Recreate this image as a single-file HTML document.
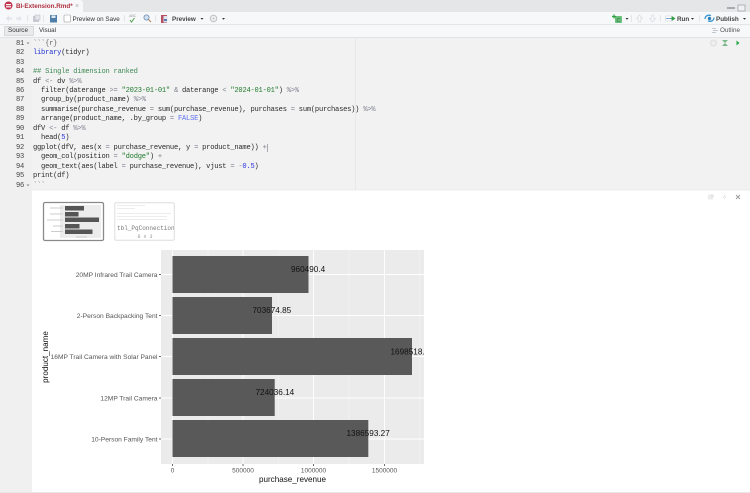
<!DOCTYPE html>
<html><head><meta charset="utf-8"><style>
html,body{margin:0;padding:0;width:750px;height:493px;overflow:hidden;background:#f2f2f2;font-family:"Liberation Sans",sans-serif}
#w{left:0;top:0;width:750px;height:493px;filter:blur(.3px)}
div{position:absolute;box-sizing:border-box}
.l{left:33px;height:10px;font:7.1px/10px "Liberation Mono",monospace;letter-spacing:-.23px;color:#2a2a2a;white-space:pre;margin-top:.7px}
.n{left:0;width:24px;text-align:right;font:7.1px/10px "Liberation Mono",monospace;letter-spacing:-.23px;color:#444;margin-top:.7px}
.k{color:#2233d0}.c{color:#3f8a55}.s{color:#1f7a2c}.o{color:#7f8190}.d{color:#2a30e0}.f{color:#5f72f0}
.t{font-size:6.3px;color:#333;white-space:pre}
</style></head><body><div id="w">
<div style="left:0;top:0;width:750px;height:12px;background:#e5e6e8"></div>
<div style="left:0;top:0;width:83px;height:13px;background:#f7f8f9;border-radius:0 3px 0 0"></div>
<div style="left:0;top:12px;width:750px;height:13px;background:#f7f8f9;border-bottom:1px solid #e4e5e7"></div>
<div style="left:0;top:25px;width:750px;height:13px;background:#f7f8f9;border-bottom:1px solid #e2e3e5"></div>
<div style="left:16px;top:2px;color:#b03040;font-size:6.3px;line-height:9px;font-weight:bold;white-space:pre">BI-Extension.Rmd*</div>
<div style="left:75px;top:2px;color:#aaa;font-size:7px;line-height:9px">×</div>
<svg style="position:absolute;left:0;top:0" width="750" height="38" viewBox="0 0 750 38">
<circle cx="8.5" cy="5.5" r="4" fill="#c0304a"/><rect x="6" y="4" width="5" height="1.2" fill="#fff"/><rect x="6" y="6.2" width="5" height="1.2" fill="#fff"/>
<path d="M6 18.5l3-3v2h3v2H9v2z" fill="#dfe4ea"/><path d="M22 18.5l-3-3v2h-3v2h3v2z" fill="#e3e7ec"/>
<rect x="33" y="16" width="6" height="6" fill="#c8ccd2"/><rect x="35" y="15" width="5" height="5" fill="#e2e5e9" stroke="#aab" stroke-width=".4"/>
<rect x="50" y="15" width="7" height="7.5" fill="#4f7ea8" rx=".5"/><rect x="51.5" y="15.5" width="4" height="2.5" fill="#dfe9f2"/>
<rect x="64" y="15" width="6.5" height="7" rx="1" fill="#fff" stroke="#9a9a9a" stroke-width=".6"/>
<path d="M130 20l1.5 2 3-4" fill="none" stroke="#50a050" stroke-width="1"/>
<text x="129" y="17" font-size="3.5" fill="#999" font-family="Liberation Sans">ABC</text>
<circle cx="146.500" cy="17.500" r="2.600" fill="#cfe0ee" stroke="#6d8fb0" stroke-width=".8"/><path d="M148.500 19.500l2.500 2.500" stroke="#b08050" stroke-width="1.100"/>
<rect x="161" y="15" width="6" height="8" fill="#b55060"/><rect x="163.500" y="16" width="4" height="6.500" fill="#dfe6f2"/><rect x="164" y="19" width="3" height="2" fill="#5a7cb0"/>
<path d="M200.500 18h3l-1.500 1.700z" fill="#333"/>
<circle cx="213.500" cy="18.500" r="3.300" fill="#eee" stroke="#c0c0c0"/><circle cx="213.500" cy="18.500" r="1" fill="#c8c8c8"/>
<path d="M222 18h3l-1.500 1.700z" fill="#333"/>
<g stroke="#dcdde0" stroke-width=".7"><path d="M27.500 15v7M43.500 15v7M124.500 15v7M155.500 15v7M631.500 15v7M660.500 15v7M699.500 15v7"/></g>
<rect x="615" y="16" width="7" height="7" rx="1" fill="#6abf7a"/><path d="M612 16.500h4M614 14.500v4" stroke="#2f9e44" stroke-width="1.200"/><text x="616.500" y="22" font-size="5.500" fill="#2c6e3c" font-family="Liberation Sans">C</text>
<path d="M625.500 18h3l-1.500 1.700z" fill="#333"/>
<path d="M639.500 15l-3 3.500h1.700v3.500h2.600v-3.500h1.700z" fill="#f6f7f8" stroke="#d6d8db" stroke-width=".6"/>
<path d="M652.500 22l-3-3.500h1.700V15h2.600v3.500h1.700z" fill="#f6f7f8" stroke="#d6d8db" stroke-width=".6"/>
<rect x="665.500" y="16" width="6" height="5" fill="#fff" stroke="#c8ccd2" stroke-width=".5"/><path d="M666 18.500h6" stroke="#4a80c0" stroke-width=".7"/><path d="M670 18.500h3M672 16.500l3 2-3 2z" fill="#2e9e44" stroke="#2e9e44" stroke-width=".6"/>
<path d="M691 18h3l-1.500 1.700z" fill="#333"/>
<path d="M705 19c0-3 3-4.500 6-3.500M714 17.500c0 3-3 4.500-6 3.500" fill="none" stroke="#3a96d0" stroke-width="1.300"/><circle cx="709.500" cy="18.500" r="1.700" fill="#2f7fb8"/>
<path d="M743 18h3l-1.500 1.700z" fill="#333"/>
<rect x="727" y="7" width="8" height="2" fill="#a8abb0"/><rect x="738" y="5" width="7" height="6" fill="#eef0f2" stroke="#9a9da2" stroke-width=".7"/>
<g stroke="#b5b8bc" stroke-width=".7"><path d="M712 28.500h4M713 30.500h5M712 32.500h4"/></g>
</svg>
<div style="left:4px;top:26px;width:30px;height:10px;background:#e8eaec;border:1px solid #d6d8da;border-radius:1px"></div>
<div class="t" style="left:8px;top:26px;line-height:10px">Source</div>
<div class="t" style="left:39px;top:26px;line-height:10px">Visual</div>
<div class="t" style="left:72.500px;top:14.500px;line-height:9px">Preview on Save</div>
<div class="t" style="left:172px;top:14.500px;line-height:9px;font-weight:bold;color:#444">Preview</div>
<div class="t" style="left:677px;top:14.500px;line-height:9px;font-weight:bold;color:#444">Run</div>
<div class="t" style="left:716px;top:14.500px;line-height:9px;font-weight:bold;color:#444">Publish</div>
<div class="t" style="left:720px;top:26px;line-height:10px;color:#555">Outline</div>

<div style="left:0;top:38px;width:32px;height:455px;background:#f0f0f0"></div>
<div style="left:355px;top:38px;width:1px;height:152px;background:#e8e8e8"></div>
<div class="n" style="top:38px">81</div><div class="n" style="top:47.500px">82</div><div class="n" style="top:57px">83</div><div class="n" style="top:66.400px">84</div><div class="n" style="top:75.900px">85</div><div class="n" style="top:85.400px">86</div><div class="n" style="top:94.800px">87</div><div class="n" style="top:104.300px">88</div><div class="n" style="top:113.800px">89</div><div class="n" style="top:123.200px">90</div><div class="n" style="top:132.700px">91</div><div class="n" style="top:142.200px">92</div><div class="n" style="top:151.600px">93</div><div class="n" style="top:161.100px">94</div><div class="n" style="top:170.600px">95</div><div class="n" style="top:180px">96</div>
<div class="l" style="top:38px"><span style="color:#666">&#96;&#96;&#96;{r}</span></div>
<div class="l" style="top:47.500px"><span class="k">library</span>(tidyr)</div>
<div class="l" style="top:66.400px"><span class="c">## Single dimension ranked</span></div>
<div class="l" style="top:75.900px">df <span class="o">&lt;-</span> dv <span class="o">%&gt;%</span></div>
<div class="l" style="top:85.400px">  filter(daterange <span class="o">&gt;=</span> <span class="s">"2023-01-01"</span> <span class="o">&amp;</span> daterange <span class="o">&lt;</span> <span class="s">"2024-01-01"</span>) <span class="o">%&gt;%</span></div>
<div class="l" style="top:94.800px">  group_by(product_name) <span class="o">%&gt;%</span></div>
<div class="l" style="top:104.300px">  summarise(purchase_revenue <span class="o">=</span> sum(purchase_revenue), purchases <span class="o">=</span> sum(purchases)) <span class="o">%&gt;%</span></div>
<div class="l" style="top:113.800px">  arrange(product_name, .by_group <span class="o">=</span> <span class="f">FALSE</span>)</div>
<div class="l" style="top:123.200px">dfV <span class="o">&lt;-</span> df <span class="o">%&gt;%</span></div>
<div class="l" style="top:132.700px">  head(<span class="d">5</span>)</div>
<div class="l" style="top:142.200px">ggplot(dfV, aes(x <span class="o">=</span> purchase_revenue, y <span class="o">=</span> product_name)) <span class="o">+</span><span style="border-left:.6px solid #aaa"></span></div>
<div class="l" style="top:151.600px">  geom_col(position <span class="o">=</span> <span class="s">"dodge"</span>) <span class="o">+</span></div>
<div class="l" style="top:161.100px">  geom_text(aes(label <span class="o">=</span> purchase_revenue), vjust <span class="o">=</span> <span class="o">-</span><span class="d">0.5</span>)</div>
<div class="l" style="top:170.600px">print(df)</div>
<div class="l" style="top:180px"><span style="color:#666">&#96;&#96;&#96;</span></div>
<svg style="position:absolute;left:0;top:0" width="750" height="493" viewBox="0 0 750 493" font-family="Liberation Sans">
<path d="M26.500 42.500h3l-1.500 1.700zM26.500 184.500h3l-1.500 1.700z" fill="#888"/>
<circle cx="713.500" cy="43" r="3" fill="#eee" stroke="#ddd"/>
<path d="M722.500 40.500h5M722.500 45.500h5" stroke="#7ab88a" stroke-width="1"/><path d="M723 41l2 2 2-2zM723 45l2-2 2 2z" fill="#7ab88a"/>
<path d="M736.500 40.500l3 2.500-3 2.500z" fill="#28a745"/>
<rect x="32" y="190" width="718" height="302" fill="#fff"/>
<path d="M32 190h718" stroke="#e6e6e6" stroke-width=".7"/>
<path d="M0 492.500h750" stroke="#e6e6e6"/>
<rect x="708.500" y="195" width="4" height="4" fill="#eee" stroke="#ddd" stroke-width=".5"/><rect x="711" y="194.500" width="2.500" height="2.500" fill="#e0e0e0"/>
<path d="M723 198l1.500-3 1.500 3zM723 196.500l1.500 2.500 1.500-2.500" fill="#ccc"/>
<path d="M736 195l4 4M740 195l-4 4" stroke="#999" stroke-width=".9"/>

<rect x="43.500" y="202.500" width="60" height="38" rx="1.500" fill="#fff" stroke="#8a8a8a" stroke-width="1.300"/>
<rect x="60" y="205" width="41" height="33" fill="#ececec"/>
<g fill="#555"><rect x="65" y="206" width="19" height="4.500"/><rect x="65" y="212" width="13.500" height="4.500"/><rect x="65" y="217.500" width="34" height="4.500"/><rect x="65" y="224" width="14.500" height="4.500"/><rect x="65" y="229.500" width="27.500" height="4.500"/></g>
<g fill="#ccc"><rect x="50" y="207.500" width="13" height="1"/><rect x="50" y="213.500" width="13" height="1"/><rect x="47" y="219.500" width="16" height="1"/><rect x="53" y="225.500" width="10" height="1"/><rect x="51" y="231" width="12" height="1"/><rect x="76" y="236.500" width="11" height="1"/></g>

<rect x="114.800" y="202.800" width="59.500" height="37.500" rx="1.500" fill="#fff" stroke="#dedede" stroke-width="1"/>
<g fill="#ececec"><rect x="117" y="205" width="28" height="1"/><rect x="117" y="208" width="18" height="1"/><rect x="117" y="213" width="54" height="1"/><rect x="117" y="216" width="50" height="1"/><rect x="117" y="219" width="50" height="1"/></g>
<svg x="115" y="203" width="59" height="37" viewBox="115 203 59 37"><text x="117" y="230" font-family="Liberation Mono" font-size="6" fill="#777">tbl_PqConnection</text></svg>
<text x="145" y="238" font-family="Liberation Mono" font-size="5" fill="#999" text-anchor="middle">8 x 3</text>

<rect x="161" y="250" width="263" height="214" fill="#ebebeb"/>
<g stroke="#f5f5f5" stroke-width=".5"><path d="M208 250v214M278.500 250v214M349 250v214M419.500 250v214"/></g>
<g stroke="#fff" stroke-width=".9"><path d="M172.500 250v214M243 250v214M313.500 250v214M384.500 250v214M161 274.500h263M161 315.500h263M161 356.500h263M161 398h263M161 439h263"/></g>
<g fill="#595959"><rect x="172.500" y="256" width="136" height="37"/><rect x="172.500" y="297" width="99.500" height="37"/><rect x="172.500" y="338" width="239.500" height="37"/><rect x="172.500" y="379" width="102.200" height="37"/><rect x="172.500" y="420" width="195.800" height="37"/></g>
<svg x="161" y="250" width="263" height="214" viewBox="161 250 263 214" font-size="8.200" fill="#111">
<text x="291" y="272">960490.4</text><text x="252.500" y="313">703674.85</text><text x="390.500" y="354.500">1698518.36</text><text x="255.500" y="395">724036.14</text><text x="346.500" y="436">1386593.27</text></svg>
<g font-size="6.650" fill="#555" text-anchor="end"><text x="157.500" y="277">20MP Infrared Trail Camera</text><text x="157.500" y="318">2-Person Backpacking Tent</text><text x="157.500" y="359">16MP Trail Camera with Solar Panel</text><text x="157.500" y="400.500">12MP Trail Camera</text><text x="157.500" y="441.500">10-Person Family Tent</text></g>
<g stroke="#333" stroke-width=".7"><path d="M159 274.500h2M159 315.500h2M159 356.500h2M159 398h2M159 439h2M172.500 464v2M243 464v2M313.500 464v2M384.500 464v2"/></g>
<g font-size="6.500" fill="#555" text-anchor="middle"><text x="172.500" y="472.500">0</text><text x="243" y="472.500">500000</text><text x="313.500" y="472.500">1000000</text><text x="384.500" y="472.500">1500000</text></g>
<text x="292.500" y="482" font-size="8.100" fill="#111" text-anchor="middle">purchase_revenue</text>
<text transform="translate(48 357) rotate(-90)" font-size="8.100" fill="#111" text-anchor="middle">product_name</text>
</svg>
</div></body></html>
